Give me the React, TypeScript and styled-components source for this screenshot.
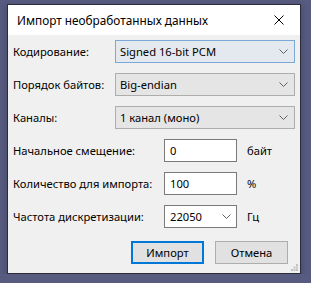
import React from 'react';
import styled, { createGlobalStyle } from 'styled-components';

const GlobalStyle = createGlobalStyle`
  html, body {
    margin: 0;
    padding: 0;
    background: #575b7f;
  }
  body {
    font-family: "Noto Sans", "Open Sans", sans-serif;
    font-size: 11.2px;
    color: #000;
  }
`;

const Chevron: React.FC = () => (
  <svg width="9" height="5" viewBox="0 0 9 5">
    <polyline points="0.5,0.5 4.5,4.5 8.5,0.5" fill="none" stroke="#606060" strokeWidth="1" />
  </svg>
);

const CloseIcon: React.FC = () => (
  <svg width="10" height="10" viewBox="0 0 10 10">
    <path d="M0.5 0.5 L9.5 9.5 M9.5 0.5 L0.5 9.5" stroke="#000" strokeWidth="1" />
  </svg>
);

const App: React.FC = () => {
  return (
    <Page>
      <GlobalStyle />
      <Window>
        <TitleBar>
          <Title>Импорт необработанных данных</Title>
          <CloseButton><CloseIcon /></CloseButton>
        </TitleBar>
        <Body>
          <WideRow>
            <Label>Кодирование:</Label>
            <Select focused>
              <span>Signed 16-bit PCM</span>
              <Chevron />
            </Select>
          </WideRow>
          <WideRow>
            <Label>Порядок байтов:</Label>
            <Select>
              <span>Big-endian</span>
              <Chevron />
            </Select>
          </WideRow>
          <WideRow>
            <Label>Каналы:</Label>
            <Select>
              <span>1 канал (моно)</span>
              <Chevron />
            </Select>
          </WideRow>
          <NarrowRow>
            <Label>Начальное смещение:</Label>
            <TextField>0</TextField>
            <Unit>байт</Unit>
          </NarrowRow>
          <NarrowRow>
            <Label>Количество для импорта:</Label>
            <TextField>100</TextField>
            <Unit>%</Unit>
          </NarrowRow>
          <NarrowRow>
            <Label>Частота дискретизации:</Label>
            <Combo>
              <span>22050</span>
              <Chevron />
            </Combo>
            <Unit>Гц</Unit>
          </NarrowRow>
          <Buttons>
            <Button primary>Импорт</Button>
            <Button>Отмена</Button>
          </Buttons>
        </Body>
        <Grip>
          <svg width="7" height="7" viewBox="0 0 7 7">
            <rect x="5" y="0" width="2" height="2" fill="#c3c3c3" />
            <rect x="2.5" y="2.5" width="2" height="2" fill="#c3c3c3" />
            <rect x="5" y="2.5" width="2" height="2" fill="#c3c3c3" />
            <rect x="0" y="5" width="2" height="2" fill="#c3c3c3" />
            <rect x="2.5" y="5" width="2" height="2" fill="#c3c3c3" />
            <rect x="5" y="5" width="2" height="2" fill="#c3c3c3" />
          </svg>
        </Grip>
      </Window>
    </Page>
  );
};

const Page: any = styled.div`
  padding: 4px 0 0 7px;
`;

const Window: any = styled.div`
  position: relative;
  width: 292px;
  height: 268px;
  border: 1px solid #2b2b3a;
  background: #f0f0f0;
  box-shadow: 0 2px 6px rgba(20, 20, 40, 0.35);
  display: flex;
  flex-direction: column;
`;

const TitleBar: any = styled.div`
  height: 30px;
  background: #fff;
  display: flex;
  align-items: center;
  padding-left: 9px;
`;

const Title: any = styled.div`
  flex: 1;
  font-size: 11.8px;
  color: #000;
`;

const CloseButton: any = styled.div`
  width: 40px;
  height: 30px;
  display: flex;
  align-items: center;
  justify-content: center;
  margin-right: 1px;
`;

const Body: any = styled.div`
  padding: 5px 5px 0 5px;
  display: flex;
  flex-direction: column;
  gap: 10px;
`;

const WideRow: any = styled.div`
  display: grid;
  grid-template-columns: 102px 180px;
  align-items: center;
  height: 23px;
`;

const NarrowRow: any = styled.div`
  display: grid;
  grid-template-columns: 151px 73px auto;
  align-items: center;
  height: 23px;
`;

const Label: any = styled.div`
  white-space: nowrap;
`;

const Select: any = styled.div<{ focused?: boolean }>`
  height: 23px;
  box-sizing: border-box;
  border: 1px solid ${(p: any) => (p.focused ? '#7aa9d8' : '#adadad')};
  background: ${(p: any) => (p.focused ? '#e4e9ef' : '#e5e5e5')};
  display: flex;
  align-items: center;
  justify-content: space-between;
  padding: 0 6px 0 4px;
`;

const TextField: any = styled.div`
  height: 23px;
  box-sizing: border-box;
  border: 1px solid #7a7a7a;
  background: #fff;
  display: flex;
  align-items: center;
  padding-left: 5px;
`;

const Combo: any = styled(TextField)`
  justify-content: space-between;
  padding-right: 5px;
`;

const Unit: any = styled.div`
  padding-left: 10px;
`;

const Buttons: any = styled.div`
  display: flex;
  justify-content: flex-end;
  gap: 11px;
  padding-right: 7px;
  margin-top: 3px;
`;

const Button: any = styled.div<{ primary?: boolean }>`
  width: 73px;
  height: 23px;
  box-sizing: border-box;
  border: ${(p: any) => (p.primary ? '2px solid #0078d7' : '1px solid #adadad')};
  background: #e1e1e1;
  display: flex;
  align-items: center;
  justify-content: center;
`;

const Grip: any = styled.div`
  position: absolute;
  right: 2px;
  bottom: 2px;
  line-height: 0;
`;

export default App;
